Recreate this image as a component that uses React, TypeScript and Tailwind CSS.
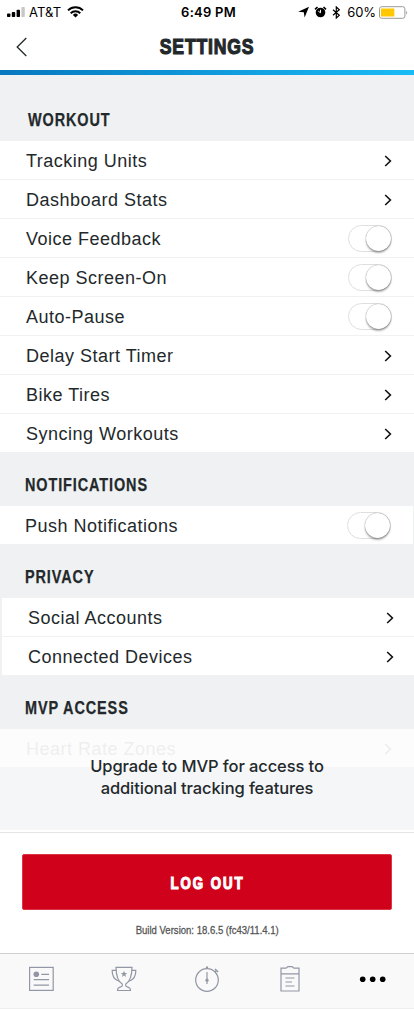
import React from "react";

function Chevron() {
  return (
    <svg width="8" height="12" viewBox="0 0 8 12" fill="none" stroke="#111" strokeWidth="1.6">
      <path d="M1.2 1 L6.4 6 L1.2 11" />
    </svg>
  );
}

function Toggle() {
  return (
    <div className="flex h-[27px] w-[44px] justify-end rounded-full border border-[#dfdfdf] bg-white">
      <div className="h-[25px] w-[25px] rounded-full bg-white shadow-[0_2px_2px_rgba(0,0,0,0.3),0_0_1px_rgba(0,0,0,0.55)]" />
    </div>
  );
}

type RowProps = { label: string; toggle?: boolean; last?: boolean; className?: string };

function Row({ label, toggle, last, className = "pl-[26px] pr-[22px]" }: RowProps) {
  return (
    <div
      className={`flex shrink-0 items-center justify-between bg-white ${
        last ? "h-[38px]" : "h-[39px] border-b border-[#f0f1f2]"
      } ${className}`}
    >
      <span className="whitespace-nowrap pt-[2px] text-[18px] leading-[24px] tracking-[0.5px]">{label}</span>
      {toggle ? (
        <Toggle />
      ) : (
        <span className="pt-px">
          <Chevron />
        </span>
      )}
    </div>
  );
}

function Heading({ children, className = "h-[54px] pl-[24.5px]" }: { children: string; className?: string }) {
  return (
    <div className={`flex shrink-0 items-end pb-[9px] ${className}`}>
      <h2 className="origin-left scale-x-[0.77] whitespace-nowrap text-[18.8px] font-bold leading-[24px] tracking-[1.15px] [-webkit-text-stroke:0.25px_#23292b]">
        {children}
      </h2>
    </div>
  );
}

function StatusBar() {
  return (
    <div className="grid h-[24px] grid-cols-3 items-center pl-[7px] pr-[6px] font-[Inter,sans-serif] text-[13px] leading-[16px] text-black">
      <div className="flex items-center">
        <svg width="19" height="12" viewBox="0 0 19 12">
          <rect x="0" y="7.5" width="3.4" height="3.5" rx="0.8" />
          <rect x="4.8" y="6" width="3.4" height="5" rx="0.8" />
          <rect x="9.6" y="3.8" width="3.4" height="7.2" rx="0.8" />
          <rect x="14.4" y="1" width="3.4" height="10" rx="0.8" fill="#c8c8c8" />
        </svg>
        <span className="ml-[3px] tracking-[0.1px]">AT&amp;T</span>
        <svg className="ml-[6px]" width="17" height="12" viewBox="0 0 17 12" fill="none" stroke="#000" strokeWidth="2">
          <path d="M1 4.4 A10.6 10.6 0 0 1 16 4.4" />
          <path d="M3.7 7.2 A6.8 6.8 0 0 1 13.3 7.2" />
          <path d="M8.5 11.5 L5.9 8.9 A3.7 3.7 0 0 1 11.1 8.9 Z" fill="#000" stroke="none" />
        </svg>
      </div>
      <div className="whitespace-nowrap pl-[2px] text-center font-semibold tracking-[0.25px]">6:49 PM</div>
      <div className="flex items-center justify-end">
        <svg width="12" height="12" viewBox="0 0 12 12">
          <path d="M11 0.8 L6.6 11.5 L5.8 6.3 L0.2 5.8 Z" />
        </svg>
        <svg className="ml-[4px]" width="13" height="12" viewBox="0 0 13 12">
          <circle cx="6.5" cy="6.5" r="4.8" />
          <path d="M1 3.3 L3.5 1 M12 3.3 L9.5 1" stroke="#000" strokeWidth="1.6" />
          <path d="M6.5 3.8 V6.8 L4.3 5.2" stroke="#fff" strokeWidth="1" fill="none" />
        </svg>
        <svg className="ml-[5px]" width="9" height="13" viewBox="0 0 9 13" fill="none" stroke="#000" strokeWidth="1.2">
          <path d="M1 3.7 L7.3 9.2 L4.3 12 V1 L7.3 3.8 L1 9.3" />
        </svg>
        <span className="ml-[6px] tracking-[-0.1px]">60%</span>
        <svg className="ml-[3px]" width="29" height="13" viewBox="0 0 29 13">
          <rect x="0.5" y="0.7" width="25.4" height="11.6" rx="2.2" fill="#fff" stroke="#999" />
          <rect x="2" y="2.5" width="13.3" height="8" fill="#ffc800" />
          <path d="M27.2 4.5 Q29 6.5 27.2 8.5 Z" fill="#999" />
        </svg>
      </div>
    </div>
  );
}

function TabBar() {
  return (
    <nav className="grid h-[56px] shrink-0 grid-cols-5 justify-items-center border-b border-t border-b-[#eeeeee] border-t-[#cfd0d1] bg-[#f9f9f9] pt-[12px] text-[#9297a5]">
      <svg width="26" height="26" viewBox="0 0 26 26" fill="none" stroke="currentColor" strokeWidth="1.2">
        <rect x="1.6" y="1.4" width="23.6" height="23" />
        <circle cx="8.3" cy="8.2" r="2.8" fill="currentColor" stroke="none" />
        <path d="M13.3 8.4 H21 M5.7 13.6 H21 M5.7 19.2 H21" />
      </svg>
      <svg width="26" height="26" viewBox="0 0 26 26" fill="none" stroke="currentColor" strokeWidth="1.2">
        <path d="M5 1.4 H21 C20.8 10 19 15.5 14.8 18 C14.2 20 15 20.8 17.5 21.4 Q19.5 22 19.5 24.5 H6.5 Q6.5 22 8.5 21.4 C11 20.8 11.8 20 11.2 18 C7 15.5 5.2 10 5 1.4 Z" />
        <path d="M5.3 4.4 H1.2 C1 9.5 3.5 13.5 8 15.2 M20.7 4.4 H24.8 C25 9.5 22.5 13.5 18 15.2" />
        <path d="M13 4.7 L13.9 7 L16.2 7.1 L14.4 8.6 L15 10.9 L13 9.6 L11 10.9 L11.6 8.6 L9.8 7.1 L12.1 7 Z" fill="currentColor" stroke="none" />
      </svg>
      <svg width="26" height="28" viewBox="0 0 26 28" fill="none" stroke="currentColor" strokeWidth="1.2">
        <circle cx="13" cy="14" r="11.3" />
        <path d="M11.9 1.7 H14.1 M13 0.2 V2.6 M21 5.9 L22.8 4.1 M21 3 L24.2 6" strokeWidth="1.4" />
        <path d="M13 6 V18" />
        <circle cx="13" cy="14.2" r="1.6" fill="currentColor" stroke="none" />
      </svg>
      <svg width="26" height="28" viewBox="0 0 26 28" fill="none" stroke="currentColor" strokeWidth="1.2">
        <path d="M4 2.2 H8.7 Q9.5 2.2 10 1.3 Q10.4 0.7 11.3 0.7 H14.7 Q15.6 0.7 16 1.3 Q16.5 2.2 17.3 2.2 H22 V25 H4 Z" />
        <path d="M4 7.8 H22 M8.5 12 H17.5 M8.5 16 H15 M8.5 20 H17.5" />
      </svg>
      <svg width="28" height="26" viewBox="0 0 28 26" fill="#000">
        <circle cx="3.7" cy="13.2" r="2.8" />
        <circle cx="13.7" cy="13.2" r="2.8" />
        <circle cx="23.7" cy="13.2" r="2.8" />
      </svg>
    </nav>
  );
}

export default function App() {
  return (
    <div className="flex h-[1009px] w-[414px] flex-col overflow-hidden bg-[#f0f1f3] font-['Liberation_Sans',Arial,sans-serif] text-[#23292b]">
      <header className="h-[70px] shrink-0 bg-white">
        <StatusBar />
        <div className="grid h-[46px] grid-cols-[1fr_auto_1fr] items-center">
          <svg className="ml-[16px]" width="12" height="20" viewBox="0 0 12 20" fill="none" stroke="#23292b" strokeWidth="1.3">
            <path d="M10.3 1 L1.2 10 L10.3 19" />
          </svg>
          <h1 className="scale-x-[0.8] whitespace-nowrap text-[22px] font-bold leading-[26px] tracking-[1px] [-webkit-text-stroke:1.2px_#23292b]">
            SETTINGS
          </h1>
        </div>
      </header>
      <div className="h-[5px] shrink-0 bg-linear-to-r from-[#0878c0] to-[#1abcf5]" />

      <Heading className="h-[66px] pl-[28px]">WORKOUT</Heading>
      <Row label="Tracking Units" />
      <Row label="Dashboard Stats" />
      <Row label="Voice Feedback" toggle />
      <Row label="Keep Screen-On" toggle />
      <Row label="Auto-Pause" toggle />
      <Row label="Delay Start Timer" />
      <Row label="Bike Tires" />
      <Row label="Syncing Workouts" last />

      <Heading>NOTIFICATIONS</Heading>
      <Row label="Push Notifications" toggle last className="mr-px pl-[25px] pr-[22px]" />

      <Heading>PRIVACY</Heading>
      <Row label="Social Accounts" className="ml-[2px] pl-[26px] pr-[20px]" />
      <Row label="Connected Devices" last className="ml-[2px] pl-[26px] pr-[20px]" />

      <Heading>MVP ACCESS</Heading>
      <section className="relative h-[103px] shrink-0 border-b-2 border-white bg-[#f5f6f8]">
        <div className="bg-white">
          <div className="opacity-[0.06]">
            <Row label="Heart Rate Zones" last />
          </div>
        </div>
        <div className="absolute inset-x-0 top-0 h-[38px] bg-black/[0.012]" />
        <p className="absolute inset-x-0 top-[26px] text-center font-[Inter,sans-serif] text-[16.5px] font-medium leading-[22px] tracking-[-0.1px]">
          Upgrade to MVP for access to
          <br />
          additional tracking features
        </p>
      </section>

      <footer className="flex h-[121px] shrink-0 flex-col border-t border-[#e4e5e6] bg-white pl-[22px] pr-[22px] pt-[21px]">
        <button className="flex h-[56px] w-[370px] items-center justify-center rounded-[2px] border border-[#dc3545] bg-[#d0021b] text-white">
          <span className="scale-x-[0.78] whitespace-nowrap pt-[3px] text-[17px] font-bold tracking-[2.5px] [-webkit-text-stroke:1.2px_white]">
            LOG OUT
          </span>
        </button>
        <div className="mt-[13px] flex justify-center">
          <span className="scale-x-[0.83] whitespace-nowrap text-[11.5px] leading-[14px] text-[#555] [-webkit-text-stroke:0.3px_#555]">
            Build Version: 18.6.5 (fc43/11.4.1)
          </span>
        </div>
      </footer>
      <TabBar />
    </div>
  );
}
